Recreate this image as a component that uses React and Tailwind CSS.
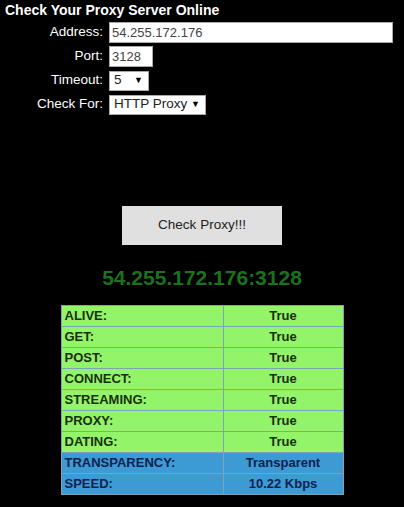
const rows = [
  { label: 'ALIVE:', value: 'True' },
  { label: 'GET:', value: 'True' },
  { label: 'POST:', value: 'True' },
  { label: 'CONNECT:', value: 'True' },
  { label: 'STREAMING:', value: 'True' },
  { label: 'PROXY:', value: 'True' },
  { label: 'DATING:', value: 'True' },
  { label: 'TRANSPARENCY:', value: 'Transparent', blue: true },
  { label: 'SPEED:', value: '10.22 Kbps', blue: true },
]

function Field({ label, children }) {
  return (
    <div className="flex items-center h-[23px]">
      <div className="w-[109px] pr-[6px] text-right text-white text-[13.5px]">{label}</div>
      {children}
    </div>
  )
}

function Select({ value, width }) {
  return (
    <div
      className={`h-[20px] bg-white border border-[#a9a9a9] flex items-center justify-between pl-[4px] pr-[5px] text-[13.5px] text-[#222] ${width}`}
    >
      <span>{value}</span>
      <span className="text-[9px] text-black">▼</span>
    </div>
  )
}

export default function App() {
  return (
    <div className="w-[404px] h-[507px] bg-black font-['Liberation_Sans',Arial,sans-serif] overflow-hidden">
      <h1 className="pl-[5px] pt-[2px] text-white font-bold text-[14px] leading-[17px]">
        Check Your Proxy Server Online
      </h1>

      <div className="mt-[2px] flex flex-col gap-[1px]">
        <Field label="Address:">
          <div className="w-[284px] h-[21px] bg-white border border-[#a9a9a9] pl-[2px] text-[13px] leading-[19px] text-[#444]">
            54.255.172.176
          </div>
        </Field>
        <Field label="Port:">
          <div className="w-[44px] h-[21px] bg-white border border-[#a9a9a9] pl-[2px] text-[13px] leading-[19px] text-[#444]">
            3128
          </div>
        </Field>
        <Field label="Timeout:">
          <Select value="5" width="w-[40px]" />
        </Field>
        <Field label="Check For:">
          <Select value="HTTP Proxy" width="w-[97px]" />
        </Field>
      </div>

      <div className="flex justify-center mt-[90px]">
        <button className="w-[160px] h-[39px] bg-[#e0e0e0] text-[#222] text-[13.5px]">
          Check Proxy!!!
        </button>
      </div>

      <div className="mt-[21px] text-center text-[#1c721c] font-bold text-[21px] leading-[24px]">
        54.255.172.176:3128
      </div>

      <div className="flex justify-center mt-[15px]">
        <table className="w-[283px] border-collapse border border-[#7fa2b4] text-[13px] font-bold">
          <tbody>
            {rows.map((r) => (
              <tr
                key={r.label}
                className={r.blue ? 'bg-[#3d9ad2] text-[#0f2150]' : 'bg-[#94f469] text-[#18300c]'}
              >
                <td className="w-[162px] h-[21px] border border-[#7fa2b4] pl-[3px] p-0">{r.label}</td>
                <td className="h-[21px] border border-[#7fa2b4] text-center p-0">{r.value}</td>
              </tr>
            ))}
          </tbody>
        </table>
      </div>
    </div>
  )
}
